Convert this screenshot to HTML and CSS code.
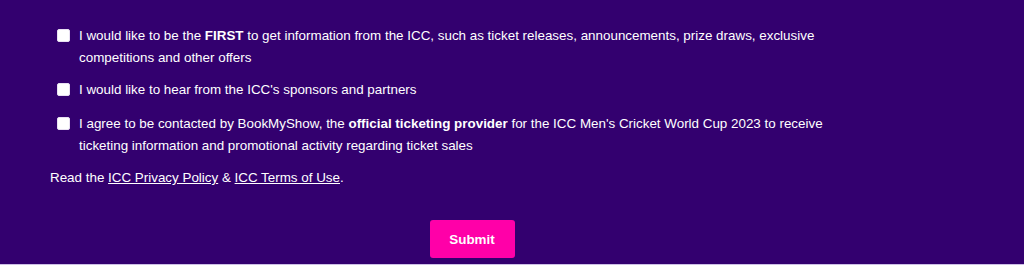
FILE: index.html
```html
<!DOCTYPE html>
<html lang="en">
<head>
<meta charset="utf-8">
<title>ICC Consent</title>
<link rel="stylesheet" href="styles.css">
</head>
<body>
<form class="consent">
  <label class="option">
    <input type="checkbox" class="box">
    <span class="text">I would like to be the <b>FIRST</b> to get information from the ICC, such as ticket releases, announcements, prize draws, exclusive competitions and other offers</span>
  </label>
  <label class="option option-mid">
    <input type="checkbox" class="box">
    <span class="text">I would like to hear from the ICC's sponsors and partners</span>
  </label>
  <label class="option">
    <input type="checkbox" class="box">
    <span class="text">I agree to be contacted by BookMyShow, the <b>official ticketing provider</b> for the ICC Men's Cricket World Cup 2023 to receive ticketing information and promotional activity regarding ticket sales</span>
  </label>
  <p class="policy">Read the <a href="#">ICC Privacy Policy</a> &amp; <a href="#">ICC Terms of Use</a>.</p>
  <div class="actions">
    <button type="button" class="submit">Submit</button>
  </div>
</form>
</body>
</html>
```
FILE: styles.css
```css
html, body {
  margin: 0;
  padding: 0;
}
body {
  background: #33006f;
  height: 264px;
  border-bottom: 1px solid #cdbfe6;
  font-family: "Liberation Sans", Arial, sans-serif;
  font-size: 13.4px;
  color: #ffffff;
  overflow: hidden;
}
.consent {
  width: 844px;
  margin-left: 50px;
  padding-top: 25px;
  display: flex;
  flex-direction: column;
}
.option {
  display: flex;
  align-items: flex-start;
  padding-left: 7px;
  padding-right: 34px;
  line-height: 22px;
  margin-bottom: 10px;
}
.option-mid {
  margin-bottom: 12px;
}
.box {
  appearance: none;
  -webkit-appearance: none;
  width: 13px;
  height: 13px;
  margin: 4px 9px 0 0;
  background: #ffffff;
  border: 1px solid #e8e0f2;
  border-radius: 2px;
  flex: none;
}
.text b {
  font-weight: 700;
}
.policy {
  margin: 0;
  line-height: 22px;
}
.policy a {
  color: #ffffff;
  text-decoration: underline;
}
.actions {
  display: flex;
  justify-content: center;
  margin-top: 31px;
}
.submit {
  width: 85px;
  height: 38px;
  border: none;
  border-radius: 3px;
  background: #ff00a8;
  color: #ffffff;
  font-family: "Liberation Sans", Arial, sans-serif;
  font-weight: 700;
  font-size: 13.4px;
}
```
